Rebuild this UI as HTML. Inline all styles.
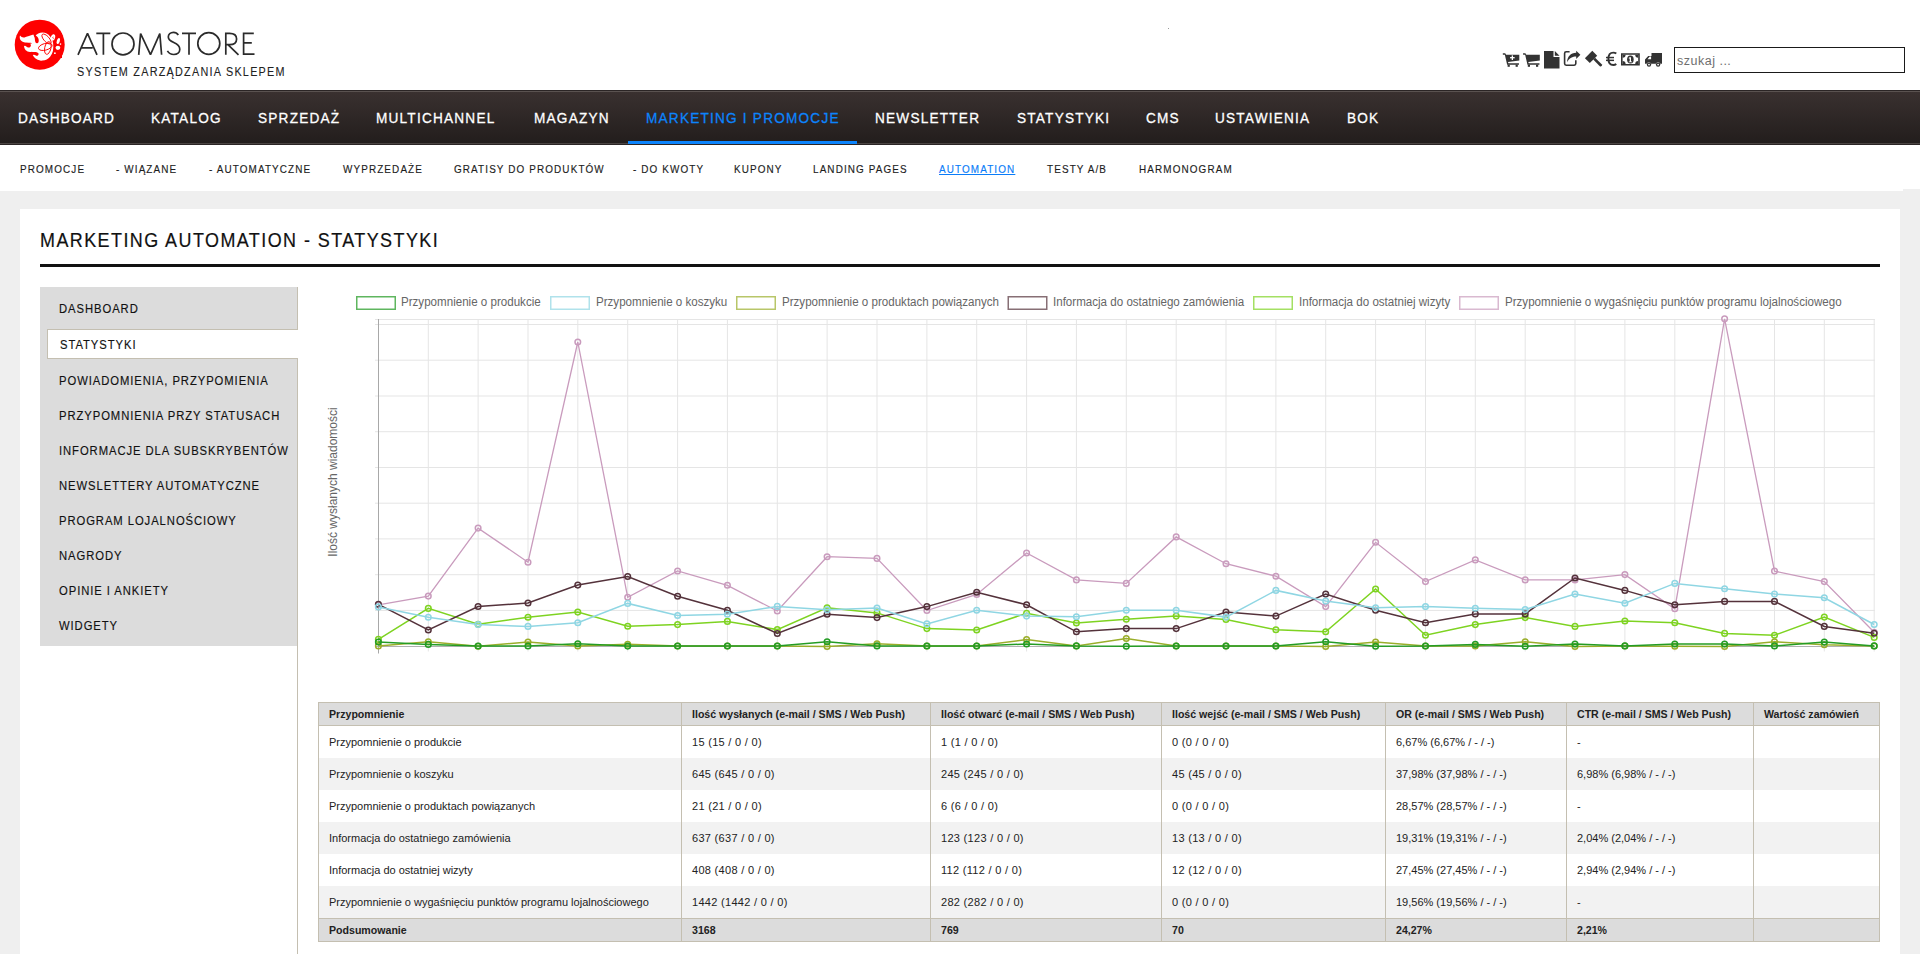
<!DOCTYPE html>
<html><head><meta charset="utf-8"><title>Marketing Automation - Statystyki</title>
<style>
*{margin:0;padding:0;box-sizing:border-box}
html,body{width:1920px;height:954px;overflow:hidden;background:#fff;font-family:"Liberation Sans",sans-serif}
.abs{position:absolute}
.nav{position:absolute;left:0;top:90px;width:1920px;height:55px;background:linear-gradient(#3a3130,#221d1c);border-top:1px solid #2b2525;border-bottom:1px solid #2b2525;box-shadow:inset 0 1px 0 #5a5250, inset 0 -1px 0 #4a4442}
.nv{position:absolute;top:109px;font-size:14.8px;line-height:18px;color:#fff;white-space:nowrap;letter-spacing:1.32px;-webkit-text-stroke:0.3px #fff;transform:scaleX(0.92);transform-origin:0 0}
.nv.act{color:#0c84fc;-webkit-text-stroke:0.3px #0c84fc}
.sn{position:absolute;top:162px;font-size:11px;line-height:14px;color:#1d1d1d;white-space:nowrap;letter-spacing:1.25px;transform:scaleX(0.9);transform-origin:0 0;-webkit-text-stroke:0.15px #1d1d1d}
.sn.act{color:#0a7cf8;text-decoration:underline;-webkit-text-stroke:0.15px #0a7cf8}
.sd{position:absolute;left:59px;font-size:12.5px;line-height:16px;color:#111;white-space:nowrap;letter-spacing:1.04px;transform:scaleX(0.9);transform-origin:0 0;-webkit-text-stroke:0.15px #111}
.lg{position:absolute;top:294.6px;font-size:12px;line-height:14px;color:#666;white-space:nowrap;transform:scaleX(0.965);transform-origin:0 0}
.th{position:absolute;font-size:10.6px;line-height:14px;font-weight:bold;color:#222;white-space:nowrap}
.td{position:absolute;font-size:11px;line-height:14px;color:#222;white-space:nowrap}
.num{letter-spacing:0.3px}
</style></head><body>

<svg style="position:absolute;left:14px;top:19px" width="52" height="52" viewBox="14 19 52 52">
 <circle cx="39.7" cy="44.7" r="25" fill="#fe0000"/>
 <g fill="#fff">
  <ellipse cx="42.5" cy="46.6" rx="11" ry="14"/>
  <path d="M20,35.6 C21.5,37.6 23.8,37.8 25.6,36.9 C27.5,36 30,35.8 33.5,34.4 L37,44 C34,43.5 31,42.8 28.5,42.8 C25,42.8 21,42 20,39 C19.6,37.8 19.7,36.5 20,35.6 Z"/>
  <path d="M24,45.8 C24.2,49.5 26.5,51.8 30,51.9 C32,52 34,51.5 36,52 L38,48 L34,43.5 C31,43.5 26,44 24,45.8 Z"/>
  <path d="M32.8,54.9 C34,57.5 37,60.4 42,60.5 L44,56 L36,53.5 Z"/>
 </g>
 <g fill="#fe0000">
  <path d="M16,42.9 C22,42.9 26,42.7 28.5,43 C30.3,43.3 31,44.4 30.9,45.4 C30.8,46.8 29.6,47.6 28.2,47.4 C27,47.2 26.2,46.4 25.4,46 C24.8,45.7 24.2,45.8 24,46.2 L16,48 Z"/>
  <path d="M22,51.5 C25,52.4 29,52.3 32,52 C35,51.7 37.5,52 38.4,53.3 C39,54.5 38.3,55.6 37.2,55.7 C36,55.8 35,55 34,54.7 C33.5,54.6 33,54.7 32.8,54.9 L22,58 Z"/>
  <path d="M33.6,34.4 C35.5,35 37.6,36.2 38.4,38.5 C39.1,40.6 38.8,43 37.3,43.3 C35.8,43.6 35.2,42.1 35,40.5 C34.8,38.5 34.6,36 33.4,34.6 Z"/>
 </g>
 <g fill="none" stroke="#fe0000" stroke-width="0.9">
  <ellipse cx="45.3" cy="46.8" rx="7" ry="3.3" transform="rotate(-15 45.3 46.8)"/>
  <ellipse cx="47.8" cy="48" rx="3.1" ry="6.4" transform="rotate(12 47.8 48)"/>
  <ellipse cx="46.5" cy="39" rx="6.2" ry="2.7" transform="rotate(48 46.5 39)"/>
 </g>
 <g fill="#fe0000">
  <path d="M53.5,33 L62,33 L62,58 L50,58 C52.5,55 53.6,51 53.6,47 C53.6,42 53.4,37 53.5,33 Z"/>
 </g>
 <g fill="#fff">
  <ellipse cx="53" cy="37.4" rx="2.1" ry="3.3" transform="rotate(15 53 37.4)"/>
  <ellipse cx="58.3" cy="41" rx="1.5" ry="3.1" transform="rotate(18 58.3 41)"/>
  <ellipse cx="57.9" cy="47.8" rx="2.4" ry="2.1"/>
  <circle cx="60.5" cy="44.1" r="0.8"/><circle cx="54.9" cy="53.2" r="0.9"/>
 </g>
 <path d="M53.6,38.6 C52.8,38.2 52.6,37.2 53.2,36.8" fill="none" stroke="#fe0000" stroke-width="0.8"/>
</svg>

<svg style="position:absolute;left:60px;top:25px" width="210" height="40" viewBox="60 25 210 40">
 <g fill="none" stroke="#2b2b2b" stroke-width="1.7" stroke-linecap="butt" stroke-linejoin="miter">
  <path d="M78,54.8 L87.5,33.4 L97,54.8 M81.6,47.8 H92.7" stroke-linejoin="bevel"/>
  <path d="M96.3,33.3 H110.3 M103.4,33.3 V54.8"/>
  <ellipse cx="123" cy="43.9" rx="11" ry="10.9"/>
  <path d="M138.7,54.8 L140.6,33.6 L150.5,54.6 L159.8,33.6 L161.6,54.8" stroke-linejoin="bevel"/>
  <path d="M178.3,35 C177,32.9 175.4,32.3 173.5,32.3 C170.5,32.3 168.3,34.3 168.3,37 C168.3,40 171,41.3 173.8,42.5 C177.3,44 179.8,45.8 179.8,49.3 C179.8,52.5 177.2,54.5 173.8,54.5 C170.8,54.5 168.7,53 167.4,50.9"/>
  <path d="M182,33.3 H196 M189,33.3 V54.8"/>
  <ellipse cx="208.8" cy="43.5" rx="11" ry="10.9"/>
  <path d="M225.8,54.8 V33.4 H229.5 C234,33.4 236.6,35.5 236.6,39 C236.6,42.5 234,44.7 229.5,44.7 H226 M228.2,44.9 L238.5,54.8"/>
  <path d="M253.8,33.3 H243.6 V54.2 H254.5 M243.6,42.8 H251.8"/>
 </g>
</svg>
<div class="abs" style="left:77px;top:65px;font-size:12px;line-height:14px;letter-spacing:1.41px;color:#222;white-space:nowrap;transform:scaleX(0.9);transform-origin:0 0;-webkit-text-stroke:0.1px #222">SYSTEM ZARZĄDZANIA SKLEPEM</div>
<div class="abs" style="left:1168px;top:28px;width:1px;height:1px;background:#999"></div>

<svg style="position:absolute;left:1500px;top:46px" width="170" height="26" viewBox="1500 46 170 26">
 <g fill="#333">
  <path d="M1502.8,53.2 h2.4 l0.9,1.6 h13.2 v5.8 l-11.3,1.5 l0.35,1.1 h10.6 v1.5 h-11.8 l-2.3,-10 h-2z"/>
  <rect x="1507.6" y="64.6" width="2.2" height="2.2"/><rect x="1515.6" y="64.6" width="2.2" height="2.2"/>
  <path d="M1523,53.2 h2.4 l0.9,1.6 h13.5 v5.8 l-11.5,1.5 l0.35,1.1 h10.8 v1.5 h-12 l-2.3,-10 h-2z"/>
  <rect x="1527.8" y="64.6" width="2.2" height="2.2"/><rect x="1536" y="64.6" width="2.2" height="2.2"/>
  <path d="M1544,51 h9.5 v6 h6 v11.4 h-15.5z"/><path d="M1554.8,51 l4.7,4.7 h-4.7z"/>
  <path d="M1569.6,51 h-3.4 a2.4,2.4 0 0 0 -2.4,2.4 v10.2 a2.4,2.4 0 0 0 2.4,2.4 h8 a2.4,2.4 0 0 0 2.4,-2.4 v-3.4 h-1.6 v3.2 a1,1 0 0 1 -1,1 h-7.6 a1,1 0 0 1 -1,-1 v-9.8 a1,1 0 0 1 1,-1 h3.2z"/>
  <path d="M1576.2,50.8 l4.2,4 l-4.2,4.2 v-2.5 c-3.6,0 -6.8,1.5 -9.2,5.8 c0.3,-5.8 3.6,-9.6 9.2,-9.6z"/>
  <path d="M1592.3,50.8 l4.9,4.9 l-7.4,7.4 l-4.9,-4.9z"/>
  <path d="M1593.2,59.6 l1.9,-1.9 l6.6,6.6 a1.35,1.35 0 0 1 -1.9,1.9z"/>
 </g>
 <g fill="none" stroke="#333" stroke-width="1.9">
  <path d="M1616.3,53.6 C1615.4,52.9 1614.4,52.6 1613.3,52.6 C1610,52.6 1608.4,55.5 1608.4,58.8 C1608.4,62.2 1610,65 1613.3,65 C1614.4,65 1615.4,64.7 1616.3,64"/>
 </g>
 <g fill="#333">
  <rect x="1606" y="56.8" width="8" height="1.5"/><rect x="1606" y="59.6" width="8" height="1.5"/>
 </g>
 <g fill="#333">
  <path d="M1621,53.2 h18.8 v12.4 h-18.8z M1622.6,54.8 v9.2 h15.6 v-9.2z"/>
  <path d="M1622.6,54.8 h3 a3,3 0 0 1 -3,3z M1638.2,54.8 h-3 a3,3 0 0 0 3,3z M1622.6,64 h3 a3,3 0 0 0 -3,-3z M1638.2,64 h-3 a3,3 0 0 1 3,-3z"/>
  <ellipse cx="1630.4" cy="59.4" rx="3.3" ry="4" fill="#333"/>
  <path d="M1629.6,57.2 h1.4 v4.2 h1 v0.9 h-3.2 v-0.9 h0.9 v-3 l-0.9,0.3 v-0.9z" fill="#fff"/>
  <path d="M1651.5,53 h10.5 v10.8 h-1.6 a2.5,2.5 0 0 0 -4.6,0 h-4.6 a2.5,2.5 0 0 0 -4.6,0 h-1.6 v-4.2 l3.2,-3.6 h3.3z M1647.5,59.2 h3.6 v-2.6 h-1.4z"/>
  <circle cx="1649" cy="64.6" r="2.2"/><circle cx="1658.1" cy="64.6" r="2.2"/>
 </g>
 <g fill="#fff"><circle cx="1649" cy="64.6" r="0.9"/><circle cx="1658.1" cy="64.6" r="0.9"/>
  <rect x="1511.7" y="55.4" width="1.3" height="4.6"/><rect x="1510.05" y="57.05" width="4.6" height="1.3"/>
 </g>
</svg>
<div class="abs" style="left:1674px;top:47px;width:231px;height:26px;border:1px solid #1a1a1a;background:#fff"></div>
<div class="abs" style="left:1677px;top:53px;font-size:12.5px;letter-spacing:0.5px;line-height:16px;color:#6e6e6e;white-space:nowrap">szukaj ...</div>
<div class="nav"></div>
<div class="abs" style="left:628px;top:141px;width:229px;height:3px;background:#0c84fc"></div>
<div class="nv" style="left:18px">DASHBOARD</div><div class="nv" style="left:151px">KATALOG</div><div class="nv" style="left:258px">SPRZEDAŻ</div><div class="nv" style="left:376px">MULTICHANNEL</div><div class="nv" style="left:534px">MAGAZYN</div><div class="nv act" style="left:646px">MARKETING I PROMOCJE</div><div class="nv" style="left:875px">NEWSLETTER</div><div class="nv" style="left:1017px">STATYSTYKI</div><div class="nv" style="left:1146px">CMS</div><div class="nv" style="left:1215px">USTAWIENIA</div><div class="nv" style="left:1347px">BOK</div>
<div class="sn" style="left:20px">PROMOCJE</div><div class="sn" style="left:116px">- WIĄZANE</div><div class="sn" style="left:209px">- AUTOMATYCZNE</div><div class="sn" style="left:343px">WYPRZEDAŻE</div><div class="sn" style="left:454px">GRATISY DO PRODUKTÓW</div><div class="sn" style="left:633.3px">- DO KWOTY</div><div class="sn" style="left:734.3px">KUPONY</div><div class="sn" style="left:813px">LANDING PAGES</div><div class="sn act" style="left:938.7px">AUTOMATION</div><div class="sn" style="left:1046.7px">TESTY A/B</div><div class="sn" style="left:1138.7px">HARMONOGRAM</div>
<div class="abs" style="left:0;top:191px;width:1920px;height:763px;background:#efefef"></div>
<div class="abs" style="left:1903px;top:189px;width:17px;height:2px;background:#efefef"></div>
<div class="abs" style="left:20px;top:209px;width:1880px;height:745px;background:#fff"></div>
<div class="abs" style="left:40px;top:229px;font-size:19.5px;line-height:22px;letter-spacing:1.57px;color:#111;white-space:nowrap;transform:scaleX(0.92);transform-origin:0 0;-webkit-text-stroke:0.2px #111">MARKETING AUTOMATION - STATYSTYKI</div>
<div class="abs" style="left:40px;top:264px;width:1840px;height:3px;background:#111"></div>
<div class="abs" style="left:40px;top:287px;width:258px;height:359px;background:#dcdcdc"></div>
<div class="abs" style="left:297px;top:287px;width:1px;height:667px;background:#c4bfb1"></div>
<div class="abs" style="left:47px;top:329px;width:251px;height:30px;background:#fff;border:1px solid #c4bfb1;border-right:none"></div>
<div class="sd" style="top:301px">DASHBOARD</div><div class="sd" style="top:337px;left:60px">STATYSTYKI</div><div class="sd" style="top:373px">POWIADOMIENIA, PRZYPOMIENIA</div><div class="sd" style="top:408px">PRZYPOMNIENIA PRZY STATUSACH</div><div class="sd" style="top:443px">INFORMACJE DLA SUBSKRYBENTÓW</div><div class="sd" style="top:478px">NEWSLETTERY AUTOMATYCZNE</div><div class="sd" style="top:513px">PROGRAM LOJALNOŚCIOWY</div><div class="sd" style="top:548px">NAGRODY</div><div class="sd" style="top:583px">OPINIE I ANKIETY</div><div class="sd" style="top:618px">WIDGETY</div>
<svg class="abs" style="left:0;top:0" width="1920" height="954" viewBox="0 0 1920 954">
<line x1="375" y1="319.5" x2="1875" y2="319.5" stroke="#e5e5e5" stroke-width="1"/>
<line x1="375" y1="324.5" x2="1875" y2="324.5" stroke="#e5e5e5" stroke-width="1"/>
<line x1="375" y1="360.2" x2="1875" y2="360.2" stroke="#e5e5e5" stroke-width="1"/>
<line x1="375" y1="396.0" x2="1875" y2="396.0" stroke="#e5e5e5" stroke-width="1"/>
<line x1="375" y1="431.7" x2="1875" y2="431.7" stroke="#e5e5e5" stroke-width="1"/>
<line x1="375" y1="467.5" x2="1875" y2="467.5" stroke="#e5e5e5" stroke-width="1"/>
<line x1="375" y1="503.2" x2="1875" y2="503.2" stroke="#e5e5e5" stroke-width="1"/>
<line x1="375" y1="538.9" x2="1875" y2="538.9" stroke="#e5e5e5" stroke-width="1"/>
<line x1="375" y1="574.7" x2="1875" y2="574.7" stroke="#e5e5e5" stroke-width="1"/>
<line x1="375" y1="610.4" x2="1875" y2="610.4" stroke="#e5e5e5" stroke-width="1"/>
<line x1="428.3" y1="319.5" x2="428.3" y2="651.5" stroke="#e5e5e5" stroke-width="1"/>
<line x1="478.1" y1="319.5" x2="478.1" y2="651.5" stroke="#e5e5e5" stroke-width="1"/>
<line x1="528.0" y1="319.5" x2="528.0" y2="651.5" stroke="#e5e5e5" stroke-width="1"/>
<line x1="577.8" y1="319.5" x2="577.8" y2="651.5" stroke="#e5e5e5" stroke-width="1"/>
<line x1="627.7" y1="319.5" x2="627.7" y2="651.5" stroke="#e5e5e5" stroke-width="1"/>
<line x1="677.6" y1="319.5" x2="677.6" y2="651.5" stroke="#e5e5e5" stroke-width="1"/>
<line x1="727.4" y1="319.5" x2="727.4" y2="651.5" stroke="#e5e5e5" stroke-width="1"/>
<line x1="777.3" y1="319.5" x2="777.3" y2="651.5" stroke="#e5e5e5" stroke-width="1"/>
<line x1="827.1" y1="319.5" x2="827.1" y2="651.5" stroke="#e5e5e5" stroke-width="1"/>
<line x1="877.0" y1="319.5" x2="877.0" y2="651.5" stroke="#e5e5e5" stroke-width="1"/>
<line x1="926.9" y1="319.5" x2="926.9" y2="651.5" stroke="#e5e5e5" stroke-width="1"/>
<line x1="976.7" y1="319.5" x2="976.7" y2="651.5" stroke="#e5e5e5" stroke-width="1"/>
<line x1="1026.6" y1="319.5" x2="1026.6" y2="651.5" stroke="#e5e5e5" stroke-width="1"/>
<line x1="1076.4" y1="319.5" x2="1076.4" y2="651.5" stroke="#e5e5e5" stroke-width="1"/>
<line x1="1126.3" y1="319.5" x2="1126.3" y2="651.5" stroke="#e5e5e5" stroke-width="1"/>
<line x1="1176.2" y1="319.5" x2="1176.2" y2="651.5" stroke="#e5e5e5" stroke-width="1"/>
<line x1="1226.0" y1="319.5" x2="1226.0" y2="651.5" stroke="#e5e5e5" stroke-width="1"/>
<line x1="1275.9" y1="319.5" x2="1275.9" y2="651.5" stroke="#e5e5e5" stroke-width="1"/>
<line x1="1325.7" y1="319.5" x2="1325.7" y2="651.5" stroke="#e5e5e5" stroke-width="1"/>
<line x1="1375.6" y1="319.5" x2="1375.6" y2="651.5" stroke="#e5e5e5" stroke-width="1"/>
<line x1="1425.5" y1="319.5" x2="1425.5" y2="651.5" stroke="#e5e5e5" stroke-width="1"/>
<line x1="1475.3" y1="319.5" x2="1475.3" y2="651.5" stroke="#e5e5e5" stroke-width="1"/>
<line x1="1525.2" y1="319.5" x2="1525.2" y2="651.5" stroke="#e5e5e5" stroke-width="1"/>
<line x1="1575.0" y1="319.5" x2="1575.0" y2="651.5" stroke="#e5e5e5" stroke-width="1"/>
<line x1="1624.9" y1="319.5" x2="1624.9" y2="651.5" stroke="#e5e5e5" stroke-width="1"/>
<line x1="1674.8" y1="319.5" x2="1674.8" y2="651.5" stroke="#e5e5e5" stroke-width="1"/>
<line x1="1724.6" y1="319.5" x2="1724.6" y2="651.5" stroke="#e5e5e5" stroke-width="1"/>
<line x1="1774.5" y1="319.5" x2="1774.5" y2="651.5" stroke="#e5e5e5" stroke-width="1"/>
<line x1="1824.3" y1="319.5" x2="1824.3" y2="651.5" stroke="#e5e5e5" stroke-width="1"/>
<line x1="1874.2" y1="319.5" x2="1874.2" y2="651.5" stroke="#e5e5e5" stroke-width="1"/>
<line x1="378.5" y1="319" x2="378.5" y2="653.5" stroke="#a8a8a8" stroke-width="1"/>
<line x1="375" y1="646.5" x2="1875" y2="646.5" stroke="#b0b0b0" stroke-width="1"/>
<polyline points="378.4,604.9 428.3,596.1 478.1,528.1 528.0,562.2 577.8,342.0 627.7,597.3 677.6,571.0 727.4,585.3 777.3,611.0 827.1,556.7 877.0,558.4 926.9,610.5 976.7,594.4 1026.6,553.0 1076.4,579.9 1126.3,583.4 1176.2,536.9 1226.0,563.7 1275.9,576.2 1325.7,606.6 1375.6,542.3 1425.5,581.6 1475.3,559.9 1525.2,579.9 1575.0,579.9 1624.9,574.6 1674.8,608.8 1724.6,318.8 1774.5,571.1 1824.3,581.6 1874.2,632.3" fill="none" stroke="#c99bbd" stroke-width="1.3" stroke-linejoin="miter"/>
<circle cx="378.4" cy="604.9" r="2.8" fill="none" stroke="#c99bbd" stroke-width="1.5"/>
<circle cx="428.3" cy="596.1" r="2.8" fill="none" stroke="#c99bbd" stroke-width="1.5"/>
<circle cx="478.1" cy="528.1" r="2.8" fill="none" stroke="#c99bbd" stroke-width="1.5"/>
<circle cx="528.0" cy="562.2" r="2.8" fill="none" stroke="#c99bbd" stroke-width="1.5"/>
<circle cx="577.8" cy="342.0" r="2.8" fill="none" stroke="#c99bbd" stroke-width="1.5"/>
<circle cx="627.7" cy="597.3" r="2.8" fill="none" stroke="#c99bbd" stroke-width="1.5"/>
<circle cx="677.6" cy="571.0" r="2.8" fill="none" stroke="#c99bbd" stroke-width="1.5"/>
<circle cx="727.4" cy="585.3" r="2.8" fill="none" stroke="#c99bbd" stroke-width="1.5"/>
<circle cx="777.3" cy="611.0" r="2.8" fill="none" stroke="#c99bbd" stroke-width="1.5"/>
<circle cx="827.1" cy="556.7" r="2.8" fill="none" stroke="#c99bbd" stroke-width="1.5"/>
<circle cx="877.0" cy="558.4" r="2.8" fill="none" stroke="#c99bbd" stroke-width="1.5"/>
<circle cx="926.9" cy="610.5" r="2.8" fill="none" stroke="#c99bbd" stroke-width="1.5"/>
<circle cx="976.7" cy="594.4" r="2.8" fill="none" stroke="#c99bbd" stroke-width="1.5"/>
<circle cx="1026.6" cy="553.0" r="2.8" fill="none" stroke="#c99bbd" stroke-width="1.5"/>
<circle cx="1076.4" cy="579.9" r="2.8" fill="none" stroke="#c99bbd" stroke-width="1.5"/>
<circle cx="1126.3" cy="583.4" r="2.8" fill="none" stroke="#c99bbd" stroke-width="1.5"/>
<circle cx="1176.2" cy="536.9" r="2.8" fill="none" stroke="#c99bbd" stroke-width="1.5"/>
<circle cx="1226.0" cy="563.7" r="2.8" fill="none" stroke="#c99bbd" stroke-width="1.5"/>
<circle cx="1275.9" cy="576.2" r="2.8" fill="none" stroke="#c99bbd" stroke-width="1.5"/>
<circle cx="1325.7" cy="606.6" r="2.8" fill="none" stroke="#c99bbd" stroke-width="1.5"/>
<circle cx="1375.6" cy="542.3" r="2.8" fill="none" stroke="#c99bbd" stroke-width="1.5"/>
<circle cx="1425.5" cy="581.6" r="2.8" fill="none" stroke="#c99bbd" stroke-width="1.5"/>
<circle cx="1475.3" cy="559.9" r="2.8" fill="none" stroke="#c99bbd" stroke-width="1.5"/>
<circle cx="1525.2" cy="579.9" r="2.8" fill="none" stroke="#c99bbd" stroke-width="1.5"/>
<circle cx="1575.0" cy="579.9" r="2.8" fill="none" stroke="#c99bbd" stroke-width="1.5"/>
<circle cx="1624.9" cy="574.6" r="2.8" fill="none" stroke="#c99bbd" stroke-width="1.5"/>
<circle cx="1674.8" cy="608.8" r="2.8" fill="none" stroke="#c99bbd" stroke-width="1.5"/>
<circle cx="1724.6" cy="318.8" r="2.8" fill="none" stroke="#c99bbd" stroke-width="1.5"/>
<circle cx="1774.5" cy="571.1" r="2.8" fill="none" stroke="#c99bbd" stroke-width="1.5"/>
<circle cx="1824.3" cy="581.6" r="2.8" fill="none" stroke="#c99bbd" stroke-width="1.5"/>
<circle cx="1874.2" cy="632.3" r="2.8" fill="none" stroke="#c99bbd" stroke-width="1.5"/>
<polyline points="378.4,639.4 428.3,608.4 478.1,624.2 528.0,617.3 577.8,612.1 627.7,626.3 677.6,624.6 727.4,621.4 777.3,629.6 827.1,607.7 877.0,612.9 926.9,628.6 976.7,630.0 1026.6,613.2 1076.4,623.0 1126.3,619.3 1176.2,616.1 1226.0,619.5 1275.9,629.7 1325.7,631.8 1375.6,589.0 1425.5,635.2 1475.3,624.6 1525.2,617.6 1575.0,626.4 1624.9,621.0 1674.8,622.7 1724.6,633.4 1774.5,635.2 1824.3,617.1 1874.2,637.4" fill="none" stroke="#7ed321" stroke-width="1.5" stroke-linejoin="miter"/>
<circle cx="378.4" cy="639.4" r="2.8" fill="none" stroke="#7ed321" stroke-width="1.5"/>
<circle cx="428.3" cy="608.4" r="2.8" fill="none" stroke="#7ed321" stroke-width="1.5"/>
<circle cx="478.1" cy="624.2" r="2.8" fill="none" stroke="#7ed321" stroke-width="1.5"/>
<circle cx="528.0" cy="617.3" r="2.8" fill="none" stroke="#7ed321" stroke-width="1.5"/>
<circle cx="577.8" cy="612.1" r="2.8" fill="none" stroke="#7ed321" stroke-width="1.5"/>
<circle cx="627.7" cy="626.3" r="2.8" fill="none" stroke="#7ed321" stroke-width="1.5"/>
<circle cx="677.6" cy="624.6" r="2.8" fill="none" stroke="#7ed321" stroke-width="1.5"/>
<circle cx="727.4" cy="621.4" r="2.8" fill="none" stroke="#7ed321" stroke-width="1.5"/>
<circle cx="777.3" cy="629.6" r="2.8" fill="none" stroke="#7ed321" stroke-width="1.5"/>
<circle cx="827.1" cy="607.7" r="2.8" fill="none" stroke="#7ed321" stroke-width="1.5"/>
<circle cx="877.0" cy="612.9" r="2.8" fill="none" stroke="#7ed321" stroke-width="1.5"/>
<circle cx="926.9" cy="628.6" r="2.8" fill="none" stroke="#7ed321" stroke-width="1.5"/>
<circle cx="976.7" cy="630.0" r="2.8" fill="none" stroke="#7ed321" stroke-width="1.5"/>
<circle cx="1026.6" cy="613.2" r="2.8" fill="none" stroke="#7ed321" stroke-width="1.5"/>
<circle cx="1076.4" cy="623.0" r="2.8" fill="none" stroke="#7ed321" stroke-width="1.5"/>
<circle cx="1126.3" cy="619.3" r="2.8" fill="none" stroke="#7ed321" stroke-width="1.5"/>
<circle cx="1176.2" cy="616.1" r="2.8" fill="none" stroke="#7ed321" stroke-width="1.5"/>
<circle cx="1226.0" cy="619.5" r="2.8" fill="none" stroke="#7ed321" stroke-width="1.5"/>
<circle cx="1275.9" cy="629.7" r="2.8" fill="none" stroke="#7ed321" stroke-width="1.5"/>
<circle cx="1325.7" cy="631.8" r="2.8" fill="none" stroke="#7ed321" stroke-width="1.5"/>
<circle cx="1375.6" cy="589.0" r="2.8" fill="none" stroke="#7ed321" stroke-width="1.5"/>
<circle cx="1425.5" cy="635.2" r="2.8" fill="none" stroke="#7ed321" stroke-width="1.5"/>
<circle cx="1475.3" cy="624.6" r="2.8" fill="none" stroke="#7ed321" stroke-width="1.5"/>
<circle cx="1525.2" cy="617.6" r="2.8" fill="none" stroke="#7ed321" stroke-width="1.5"/>
<circle cx="1575.0" cy="626.4" r="2.8" fill="none" stroke="#7ed321" stroke-width="1.5"/>
<circle cx="1624.9" cy="621.0" r="2.8" fill="none" stroke="#7ed321" stroke-width="1.5"/>
<circle cx="1674.8" cy="622.7" r="2.8" fill="none" stroke="#7ed321" stroke-width="1.5"/>
<circle cx="1724.6" cy="633.4" r="2.8" fill="none" stroke="#7ed321" stroke-width="1.5"/>
<circle cx="1774.5" cy="635.2" r="2.8" fill="none" stroke="#7ed321" stroke-width="1.5"/>
<circle cx="1824.3" cy="617.1" r="2.8" fill="none" stroke="#7ed321" stroke-width="1.5"/>
<circle cx="1874.2" cy="637.4" r="2.8" fill="none" stroke="#7ed321" stroke-width="1.5"/>
<polyline points="378.4,604.3 428.3,630.0 478.1,606.5 528.0,603.0 577.8,585.1 627.7,576.5 677.6,596.3 727.4,610.3 777.3,633.5 827.1,614.2 877.0,617.6 926.9,606.6 976.7,592.2 1026.6,604.8 1076.4,631.8 1126.3,628.6 1176.2,628.6 1226.0,612.0 1275.9,616.1 1325.7,594.1 1375.6,610.2 1425.5,622.7 1475.3,613.9 1525.2,613.9 1575.0,578.0 1624.9,590.4 1674.8,604.8 1724.6,601.4 1774.5,601.4 1824.3,626.4 1874.2,633.3" fill="none" stroke="#54323b" stroke-width="1.5" stroke-linejoin="miter"/>
<circle cx="378.4" cy="604.3" r="2.8" fill="none" stroke="#54323b" stroke-width="1.5"/>
<circle cx="428.3" cy="630.0" r="2.8" fill="none" stroke="#54323b" stroke-width="1.5"/>
<circle cx="478.1" cy="606.5" r="2.8" fill="none" stroke="#54323b" stroke-width="1.5"/>
<circle cx="528.0" cy="603.0" r="2.8" fill="none" stroke="#54323b" stroke-width="1.5"/>
<circle cx="577.8" cy="585.1" r="2.8" fill="none" stroke="#54323b" stroke-width="1.5"/>
<circle cx="627.7" cy="576.5" r="2.8" fill="none" stroke="#54323b" stroke-width="1.5"/>
<circle cx="677.6" cy="596.3" r="2.8" fill="none" stroke="#54323b" stroke-width="1.5"/>
<circle cx="727.4" cy="610.3" r="2.8" fill="none" stroke="#54323b" stroke-width="1.5"/>
<circle cx="777.3" cy="633.5" r="2.8" fill="none" stroke="#54323b" stroke-width="1.5"/>
<circle cx="827.1" cy="614.2" r="2.8" fill="none" stroke="#54323b" stroke-width="1.5"/>
<circle cx="877.0" cy="617.6" r="2.8" fill="none" stroke="#54323b" stroke-width="1.5"/>
<circle cx="926.9" cy="606.6" r="2.8" fill="none" stroke="#54323b" stroke-width="1.5"/>
<circle cx="976.7" cy="592.2" r="2.8" fill="none" stroke="#54323b" stroke-width="1.5"/>
<circle cx="1026.6" cy="604.8" r="2.8" fill="none" stroke="#54323b" stroke-width="1.5"/>
<circle cx="1076.4" cy="631.8" r="2.8" fill="none" stroke="#54323b" stroke-width="1.5"/>
<circle cx="1126.3" cy="628.6" r="2.8" fill="none" stroke="#54323b" stroke-width="1.5"/>
<circle cx="1176.2" cy="628.6" r="2.8" fill="none" stroke="#54323b" stroke-width="1.5"/>
<circle cx="1226.0" cy="612.0" r="2.8" fill="none" stroke="#54323b" stroke-width="1.5"/>
<circle cx="1275.9" cy="616.1" r="2.8" fill="none" stroke="#54323b" stroke-width="1.5"/>
<circle cx="1325.7" cy="594.1" r="2.8" fill="none" stroke="#54323b" stroke-width="1.5"/>
<circle cx="1375.6" cy="610.2" r="2.8" fill="none" stroke="#54323b" stroke-width="1.5"/>
<circle cx="1425.5" cy="622.7" r="2.8" fill="none" stroke="#54323b" stroke-width="1.5"/>
<circle cx="1475.3" cy="613.9" r="2.8" fill="none" stroke="#54323b" stroke-width="1.5"/>
<circle cx="1525.2" cy="613.9" r="2.8" fill="none" stroke="#54323b" stroke-width="1.5"/>
<circle cx="1575.0" cy="578.0" r="2.8" fill="none" stroke="#54323b" stroke-width="1.5"/>
<circle cx="1624.9" cy="590.4" r="2.8" fill="none" stroke="#54323b" stroke-width="1.5"/>
<circle cx="1674.8" cy="604.8" r="2.8" fill="none" stroke="#54323b" stroke-width="1.5"/>
<circle cx="1724.6" cy="601.4" r="2.8" fill="none" stroke="#54323b" stroke-width="1.5"/>
<circle cx="1774.5" cy="601.4" r="2.8" fill="none" stroke="#54323b" stroke-width="1.5"/>
<circle cx="1824.3" cy="626.4" r="2.8" fill="none" stroke="#54323b" stroke-width="1.5"/>
<circle cx="1874.2" cy="633.3" r="2.8" fill="none" stroke="#54323b" stroke-width="1.5"/>
<polyline points="378.4,645.9 428.3,641.8 478.1,646.3 528.0,642.0 577.8,646.0 627.7,644.2 677.6,646.0 727.4,646.0 777.3,646.0 827.1,646.5 877.0,643.7 926.9,646.0 976.7,646.0 1026.6,639.6 1076.4,646.0 1126.3,638.5 1176.2,646.0 1226.0,646.0 1275.9,646.0 1325.7,646.5 1375.6,642.1 1425.5,646.0 1475.3,646.0 1525.2,641.8 1575.0,646.5 1624.9,646.0 1674.8,646.2 1724.6,646.5 1774.5,641.8 1824.3,644.7 1874.2,646.0" fill="none" stroke="#9aae2a" stroke-width="1.5" stroke-linejoin="miter"/>
<circle cx="378.4" cy="645.9" r="2.8" fill="none" stroke="#9aae2a" stroke-width="1.5"/>
<circle cx="428.3" cy="641.8" r="2.8" fill="none" stroke="#9aae2a" stroke-width="1.5"/>
<circle cx="478.1" cy="646.3" r="2.8" fill="none" stroke="#9aae2a" stroke-width="1.5"/>
<circle cx="528.0" cy="642.0" r="2.8" fill="none" stroke="#9aae2a" stroke-width="1.5"/>
<circle cx="577.8" cy="646.0" r="2.8" fill="none" stroke="#9aae2a" stroke-width="1.5"/>
<circle cx="627.7" cy="644.2" r="2.8" fill="none" stroke="#9aae2a" stroke-width="1.5"/>
<circle cx="677.6" cy="646.0" r="2.8" fill="none" stroke="#9aae2a" stroke-width="1.5"/>
<circle cx="727.4" cy="646.0" r="2.8" fill="none" stroke="#9aae2a" stroke-width="1.5"/>
<circle cx="777.3" cy="646.0" r="2.8" fill="none" stroke="#9aae2a" stroke-width="1.5"/>
<circle cx="827.1" cy="646.5" r="2.8" fill="none" stroke="#9aae2a" stroke-width="1.5"/>
<circle cx="877.0" cy="643.7" r="2.8" fill="none" stroke="#9aae2a" stroke-width="1.5"/>
<circle cx="926.9" cy="646.0" r="2.8" fill="none" stroke="#9aae2a" stroke-width="1.5"/>
<circle cx="976.7" cy="646.0" r="2.8" fill="none" stroke="#9aae2a" stroke-width="1.5"/>
<circle cx="1026.6" cy="639.6" r="2.8" fill="none" stroke="#9aae2a" stroke-width="1.5"/>
<circle cx="1076.4" cy="646.0" r="2.8" fill="none" stroke="#9aae2a" stroke-width="1.5"/>
<circle cx="1126.3" cy="638.5" r="2.8" fill="none" stroke="#9aae2a" stroke-width="1.5"/>
<circle cx="1176.2" cy="646.0" r="2.8" fill="none" stroke="#9aae2a" stroke-width="1.5"/>
<circle cx="1226.0" cy="646.0" r="2.8" fill="none" stroke="#9aae2a" stroke-width="1.5"/>
<circle cx="1275.9" cy="646.0" r="2.8" fill="none" stroke="#9aae2a" stroke-width="1.5"/>
<circle cx="1325.7" cy="646.5" r="2.8" fill="none" stroke="#9aae2a" stroke-width="1.5"/>
<circle cx="1375.6" cy="642.1" r="2.8" fill="none" stroke="#9aae2a" stroke-width="1.5"/>
<circle cx="1425.5" cy="646.0" r="2.8" fill="none" stroke="#9aae2a" stroke-width="1.5"/>
<circle cx="1475.3" cy="646.0" r="2.8" fill="none" stroke="#9aae2a" stroke-width="1.5"/>
<circle cx="1525.2" cy="641.8" r="2.8" fill="none" stroke="#9aae2a" stroke-width="1.5"/>
<circle cx="1575.0" cy="646.5" r="2.8" fill="none" stroke="#9aae2a" stroke-width="1.5"/>
<circle cx="1624.9" cy="646.0" r="2.8" fill="none" stroke="#9aae2a" stroke-width="1.5"/>
<circle cx="1674.8" cy="646.2" r="2.8" fill="none" stroke="#9aae2a" stroke-width="1.5"/>
<circle cx="1724.6" cy="646.5" r="2.8" fill="none" stroke="#9aae2a" stroke-width="1.5"/>
<circle cx="1774.5" cy="641.8" r="2.8" fill="none" stroke="#9aae2a" stroke-width="1.5"/>
<circle cx="1824.3" cy="644.7" r="2.8" fill="none" stroke="#9aae2a" stroke-width="1.5"/>
<circle cx="1874.2" cy="646.0" r="2.8" fill="none" stroke="#9aae2a" stroke-width="1.5"/>
<polyline points="378.4,606.9 428.3,617.3 478.1,624.5 528.0,626.4 577.8,622.8 627.7,603.4 677.6,615.5 727.4,614.2 777.3,606.4 827.1,609.7 877.0,608.0 926.9,623.9 976.7,610.2 1026.6,616.1 1076.4,616.8 1126.3,610.2 1176.2,610.2 1226.0,617.1 1275.9,590.4 1325.7,601.1 1375.6,607.7 1425.5,606.6 1475.3,608.3 1525.2,609.5 1575.0,594.1 1624.9,603.3 1674.8,583.4 1724.6,588.7 1774.5,594.1 1824.3,597.8 1874.2,624.5" fill="none" stroke="#8fd6e3" stroke-width="1.5" stroke-linejoin="miter"/>
<circle cx="378.4" cy="606.9" r="2.8" fill="none" stroke="#8fd6e3" stroke-width="1.5"/>
<circle cx="428.3" cy="617.3" r="2.8" fill="none" stroke="#8fd6e3" stroke-width="1.5"/>
<circle cx="478.1" cy="624.5" r="2.8" fill="none" stroke="#8fd6e3" stroke-width="1.5"/>
<circle cx="528.0" cy="626.4" r="2.8" fill="none" stroke="#8fd6e3" stroke-width="1.5"/>
<circle cx="577.8" cy="622.8" r="2.8" fill="none" stroke="#8fd6e3" stroke-width="1.5"/>
<circle cx="627.7" cy="603.4" r="2.8" fill="none" stroke="#8fd6e3" stroke-width="1.5"/>
<circle cx="677.6" cy="615.5" r="2.8" fill="none" stroke="#8fd6e3" stroke-width="1.5"/>
<circle cx="727.4" cy="614.2" r="2.8" fill="none" stroke="#8fd6e3" stroke-width="1.5"/>
<circle cx="777.3" cy="606.4" r="2.8" fill="none" stroke="#8fd6e3" stroke-width="1.5"/>
<circle cx="827.1" cy="609.7" r="2.8" fill="none" stroke="#8fd6e3" stroke-width="1.5"/>
<circle cx="877.0" cy="608.0" r="2.8" fill="none" stroke="#8fd6e3" stroke-width="1.5"/>
<circle cx="926.9" cy="623.9" r="2.8" fill="none" stroke="#8fd6e3" stroke-width="1.5"/>
<circle cx="976.7" cy="610.2" r="2.8" fill="none" stroke="#8fd6e3" stroke-width="1.5"/>
<circle cx="1026.6" cy="616.1" r="2.8" fill="none" stroke="#8fd6e3" stroke-width="1.5"/>
<circle cx="1076.4" cy="616.8" r="2.8" fill="none" stroke="#8fd6e3" stroke-width="1.5"/>
<circle cx="1126.3" cy="610.2" r="2.8" fill="none" stroke="#8fd6e3" stroke-width="1.5"/>
<circle cx="1176.2" cy="610.2" r="2.8" fill="none" stroke="#8fd6e3" stroke-width="1.5"/>
<circle cx="1226.0" cy="617.1" r="2.8" fill="none" stroke="#8fd6e3" stroke-width="1.5"/>
<circle cx="1275.9" cy="590.4" r="2.8" fill="none" stroke="#8fd6e3" stroke-width="1.5"/>
<circle cx="1325.7" cy="601.1" r="2.8" fill="none" stroke="#8fd6e3" stroke-width="1.5"/>
<circle cx="1375.6" cy="607.7" r="2.8" fill="none" stroke="#8fd6e3" stroke-width="1.5"/>
<circle cx="1425.5" cy="606.6" r="2.8" fill="none" stroke="#8fd6e3" stroke-width="1.5"/>
<circle cx="1475.3" cy="608.3" r="2.8" fill="none" stroke="#8fd6e3" stroke-width="1.5"/>
<circle cx="1525.2" cy="609.5" r="2.8" fill="none" stroke="#8fd6e3" stroke-width="1.5"/>
<circle cx="1575.0" cy="594.1" r="2.8" fill="none" stroke="#8fd6e3" stroke-width="1.5"/>
<circle cx="1624.9" cy="603.3" r="2.8" fill="none" stroke="#8fd6e3" stroke-width="1.5"/>
<circle cx="1674.8" cy="583.4" r="2.8" fill="none" stroke="#8fd6e3" stroke-width="1.5"/>
<circle cx="1724.6" cy="588.7" r="2.8" fill="none" stroke="#8fd6e3" stroke-width="1.5"/>
<circle cx="1774.5" cy="594.1" r="2.8" fill="none" stroke="#8fd6e3" stroke-width="1.5"/>
<circle cx="1824.3" cy="597.8" r="2.8" fill="none" stroke="#8fd6e3" stroke-width="1.5"/>
<circle cx="1874.2" cy="624.5" r="2.8" fill="none" stroke="#8fd6e3" stroke-width="1.5"/>
<polyline points="378.4,642.0 428.3,644.4 478.1,646.0 528.0,646.0 577.8,643.7 627.7,646.1 677.6,646.0 727.4,646.0 777.3,646.0 827.1,641.8 877.0,645.9 926.9,646.0 976.7,646.0 1026.6,644.0 1076.4,645.9 1126.3,646.2 1176.2,646.0 1226.0,646.0 1275.9,646.0 1325.7,641.8 1375.6,646.2 1425.5,646.0 1475.3,644.4 1525.2,646.2 1575.0,644.0 1624.9,645.9 1674.8,644.0 1724.6,644.0 1774.5,645.9 1824.3,642.1 1874.2,645.9" fill="none" stroke="#249c24" stroke-width="1.5" stroke-linejoin="miter"/>
<circle cx="378.4" cy="642.0" r="2.8" fill="none" stroke="#249c24" stroke-width="1.5"/>
<circle cx="428.3" cy="644.4" r="2.8" fill="none" stroke="#249c24" stroke-width="1.5"/>
<circle cx="478.1" cy="646.0" r="2.8" fill="none" stroke="#249c24" stroke-width="1.5"/>
<circle cx="528.0" cy="646.0" r="2.8" fill="none" stroke="#249c24" stroke-width="1.5"/>
<circle cx="577.8" cy="643.7" r="2.8" fill="none" stroke="#249c24" stroke-width="1.5"/>
<circle cx="627.7" cy="646.1" r="2.8" fill="none" stroke="#249c24" stroke-width="1.5"/>
<circle cx="677.6" cy="646.0" r="2.8" fill="none" stroke="#249c24" stroke-width="1.5"/>
<circle cx="727.4" cy="646.0" r="2.8" fill="none" stroke="#249c24" stroke-width="1.5"/>
<circle cx="777.3" cy="646.0" r="2.8" fill="none" stroke="#249c24" stroke-width="1.5"/>
<circle cx="827.1" cy="641.8" r="2.8" fill="none" stroke="#249c24" stroke-width="1.5"/>
<circle cx="877.0" cy="645.9" r="2.8" fill="none" stroke="#249c24" stroke-width="1.5"/>
<circle cx="926.9" cy="646.0" r="2.8" fill="none" stroke="#249c24" stroke-width="1.5"/>
<circle cx="976.7" cy="646.0" r="2.8" fill="none" stroke="#249c24" stroke-width="1.5"/>
<circle cx="1026.6" cy="644.0" r="2.8" fill="none" stroke="#249c24" stroke-width="1.5"/>
<circle cx="1076.4" cy="645.9" r="2.8" fill="none" stroke="#249c24" stroke-width="1.5"/>
<circle cx="1126.3" cy="646.2" r="2.8" fill="none" stroke="#249c24" stroke-width="1.5"/>
<circle cx="1176.2" cy="646.0" r="2.8" fill="none" stroke="#249c24" stroke-width="1.5"/>
<circle cx="1226.0" cy="646.0" r="2.8" fill="none" stroke="#249c24" stroke-width="1.5"/>
<circle cx="1275.9" cy="646.0" r="2.8" fill="none" stroke="#249c24" stroke-width="1.5"/>
<circle cx="1325.7" cy="641.8" r="2.8" fill="none" stroke="#249c24" stroke-width="1.5"/>
<circle cx="1375.6" cy="646.2" r="2.8" fill="none" stroke="#249c24" stroke-width="1.5"/>
<circle cx="1425.5" cy="646.0" r="2.8" fill="none" stroke="#249c24" stroke-width="1.5"/>
<circle cx="1475.3" cy="644.4" r="2.8" fill="none" stroke="#249c24" stroke-width="1.5"/>
<circle cx="1525.2" cy="646.2" r="2.8" fill="none" stroke="#249c24" stroke-width="1.5"/>
<circle cx="1575.0" cy="644.0" r="2.8" fill="none" stroke="#249c24" stroke-width="1.5"/>
<circle cx="1624.9" cy="645.9" r="2.8" fill="none" stroke="#249c24" stroke-width="1.5"/>
<circle cx="1674.8" cy="644.0" r="2.8" fill="none" stroke="#249c24" stroke-width="1.5"/>
<circle cx="1724.6" cy="644.0" r="2.8" fill="none" stroke="#249c24" stroke-width="1.5"/>
<circle cx="1774.5" cy="645.9" r="2.8" fill="none" stroke="#249c24" stroke-width="1.5"/>
<circle cx="1824.3" cy="642.1" r="2.8" fill="none" stroke="#249c24" stroke-width="1.5"/>
<circle cx="1874.2" cy="645.9" r="2.8" fill="none" stroke="#249c24" stroke-width="1.5"/>
<rect x="356.75" y="296.75" width="38.5" height="12.5" fill="#fff" stroke="#5fb65f" stroke-width="1.5"/>
<rect x="550.75" y="296.75" width="38.5" height="12.5" fill="#fff" stroke="#b0e2eb" stroke-width="1.5"/>
<rect x="736.75" y="296.75" width="38.5" height="12.5" fill="#fff" stroke="#b8c669" stroke-width="1.5"/>
<rect x="1008.25" y="296.75" width="38.5" height="12.5" fill="#fff" stroke="#876f75" stroke-width="1.5"/>
<rect x="1253.75" y="296.75" width="38.5" height="12.5" fill="#fff" stroke="#a4e063" stroke-width="1.5"/>
<rect x="1459.75" y="296.75" width="38.5" height="12.5" fill="#fff" stroke="#d9b9d0" stroke-width="1.5"/>
</svg>
<div class="lg" style="left:401px">Przypomnienie o produkcie</div><div class="lg" style="left:595.5px">Przypomnienie o koszyku</div><div class="lg" style="left:781.5px">Przypomnienie o produktach powiązanych</div><div class="lg" style="left:1052.7px">Informacja do ostatniego zamówienia</div><div class="lg" style="left:1298.7px">Informacja do ostatniej wizyty</div><div class="lg" style="left:1504.6px">Przypomnienie o wygaśnięciu punktów programu lojalnościowego</div>
<div class="abs" style="left:333px;top:482px;width:150px;height:14px;margin-left:-75px;margin-top:-7px;transform:rotate(-90deg);font-size:12px;line-height:14px;color:#666;white-space:nowrap;text-align:center">Ilość wysłanych wiadomości</div>
<div style="position:absolute;left:318px;top:702px;width:1562px;height:24px;background:#dcdcdc"></div>
<div style="position:absolute;left:318px;top:726px;width:1562px;height:32px;background:#fff"></div>
<div style="position:absolute;left:318px;top:758px;width:1562px;height:32px;background:#f2f2f2"></div>
<div style="position:absolute;left:318px;top:790px;width:1562px;height:32px;background:#fff"></div>
<div style="position:absolute;left:318px;top:822px;width:1562px;height:32px;background:#f2f2f2"></div>
<div style="position:absolute;left:318px;top:854px;width:1562px;height:32px;background:#fff"></div>
<div style="position:absolute;left:318px;top:886px;width:1562px;height:32px;background:#f2f2f2"></div>
<div style="position:absolute;left:318px;top:918px;width:1562px;height:24px;background:#dcdcdc"></div>
<div style="position:absolute;left:318px;top:702px;width:1562px;height:1px;background:#c4bfb1"></div>
<div style="position:absolute;left:318px;top:725px;width:1562px;height:1px;background:#c4bfb1"></div>
<div style="position:absolute;left:318px;top:918px;width:1562px;height:1px;background:#c4bfb1"></div>
<div style="position:absolute;left:318px;top:941px;width:1562px;height:1px;background:#c4bfb1"></div>
<div style="position:absolute;left:318px;top:702px;width:1px;height:240px;background:#c4bfb1"></div>
<div style="position:absolute;left:681px;top:702px;width:1px;height:240px;background:#c4bfb1"></div>
<div style="position:absolute;left:930px;top:702px;width:1px;height:240px;background:#c4bfb1"></div>
<div style="position:absolute;left:1161px;top:702px;width:1px;height:240px;background:#c4bfb1"></div>
<div style="position:absolute;left:1385px;top:702px;width:1px;height:240px;background:#c4bfb1"></div>
<div style="position:absolute;left:1566px;top:702px;width:1px;height:240px;background:#c4bfb1"></div>
<div style="position:absolute;left:1753px;top:702px;width:1px;height:240px;background:#c4bfb1"></div>
<div style="position:absolute;left:1879px;top:702px;width:1px;height:240px;background:#c4bfb1"></div>
<div class="th" style="left:329px;top:707px">Przypomnienie</div>
<div class="th" style="left:692px;top:707px">Ilość wysłanych (e-mail / SMS / Web Push)</div>
<div class="th" style="left:941px;top:707px">Ilość otwarć (e-mail / SMS / Web Push)</div>
<div class="th" style="left:1172px;top:707px">Ilość wejść (e-mail / SMS / Web Push)</div>
<div class="th" style="left:1396px;top:707px">OR (e-mail / SMS / Web Push)</div>
<div class="th" style="left:1577px;top:707px">CTR (e-mail / SMS / Web Push)</div>
<div class="th" style="left:1764px;top:707px">Wartość zamówień</div>
<div class="td" style="left:329px;top:735px">Przypomnienie o produkcie</div>
<div class="td num" style="left:692px;top:735px">15 (15 / 0 / 0)</div>
<div class="td num" style="left:941px;top:735px">1 (1 / 0 / 0)</div>
<div class="td num" style="left:1172px;top:735px">0 (0 / 0 / 0)</div>
<div class="td" style="left:1396px;top:735px">6,67% (6,67% / - / -)</div>
<div class="td" style="left:1577px;top:735px">-</div>
<div class="td" style="left:329px;top:767px">Przypomnienie o koszyku</div>
<div class="td num" style="left:692px;top:767px">645 (645 / 0 / 0)</div>
<div class="td num" style="left:941px;top:767px">245 (245 / 0 / 0)</div>
<div class="td num" style="left:1172px;top:767px">45 (45 / 0 / 0)</div>
<div class="td" style="left:1396px;top:767px">37,98% (37,98% / - / -)</div>
<div class="td" style="left:1577px;top:767px">6,98% (6,98% / - / -)</div>
<div class="td" style="left:329px;top:799px">Przypomnienie o produktach powiązanych</div>
<div class="td num" style="left:692px;top:799px">21 (21 / 0 / 0)</div>
<div class="td num" style="left:941px;top:799px">6 (6 / 0 / 0)</div>
<div class="td num" style="left:1172px;top:799px">0 (0 / 0 / 0)</div>
<div class="td" style="left:1396px;top:799px">28,57% (28,57% / - / -)</div>
<div class="td" style="left:1577px;top:799px">-</div>
<div class="td" style="left:329px;top:831px">Informacja do ostatniego zamówienia</div>
<div class="td num" style="left:692px;top:831px">637 (637 / 0 / 0)</div>
<div class="td num" style="left:941px;top:831px">123 (123 / 0 / 0)</div>
<div class="td num" style="left:1172px;top:831px">13 (13 / 0 / 0)</div>
<div class="td" style="left:1396px;top:831px">19,31% (19,31% / - / -)</div>
<div class="td" style="left:1577px;top:831px">2,04% (2,04% / - / -)</div>
<div class="td" style="left:329px;top:863px">Informacja do ostatniej wizyty</div>
<div class="td num" style="left:692px;top:863px">408 (408 / 0 / 0)</div>
<div class="td num" style="left:941px;top:863px">112 (112 / 0 / 0)</div>
<div class="td num" style="left:1172px;top:863px">12 (12 / 0 / 0)</div>
<div class="td" style="left:1396px;top:863px">27,45% (27,45% / - / -)</div>
<div class="td" style="left:1577px;top:863px">2,94% (2,94% / - / -)</div>
<div class="td" style="left:329px;top:895px">Przypomnienie o wygaśnięciu punktów programu lojalnościowego</div>
<div class="td num" style="left:692px;top:895px">1442 (1442 / 0 / 0)</div>
<div class="td num" style="left:941px;top:895px">282 (282 / 0 / 0)</div>
<div class="td num" style="left:1172px;top:895px">0 (0 / 0 / 0)</div>
<div class="td" style="left:1396px;top:895px">19,56% (19,56% / - / -)</div>
<div class="td" style="left:1577px;top:895px">-</div>
<div class="th" style="left:329px;top:923px">Podsumowanie</div>
<div class="th" style="left:692px;top:923px">3168</div>
<div class="th" style="left:941px;top:923px">769</div>
<div class="th" style="left:1172px;top:923px">70</div>
<div class="th" style="left:1396px;top:923px">24,27%</div>
<div class="th" style="left:1577px;top:923px">2,21%</div>
</body></html>
